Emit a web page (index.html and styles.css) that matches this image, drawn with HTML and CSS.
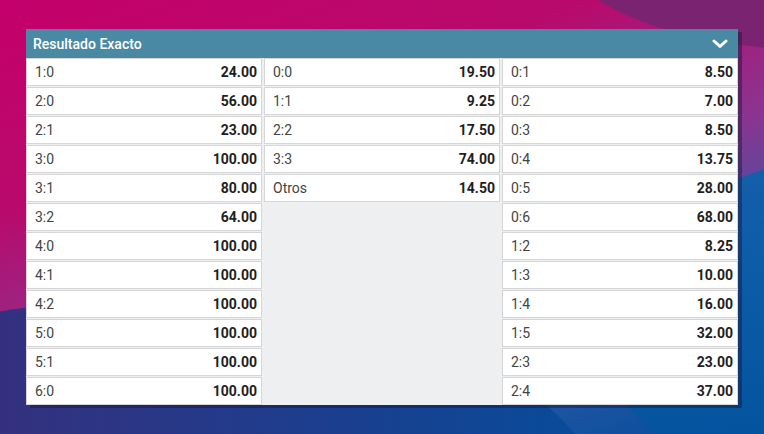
FILE: index.html
```html
<!DOCTYPE html>
<html>
<head>
<meta charset="utf-8">
<link rel="stylesheet" href="styles.css">
</head>
<body>
<div class="bg">
  <div class="wave wave-top"></div>
  <div class="wave wave-right"></div>
  <div class="wave wave-left"></div>
</div>
<div class="stage">
  <section class="panel">
    <header class="panel-head">
      <span class="title">Resultado Exacto</span>
      <svg class="chev" width="16" height="10" viewBox="0 0 16 10"><path d="M2 2 L8 7.5 L14 2" fill="none" stroke="#fff" stroke-width="3" stroke-linecap="round" stroke-linejoin="round"/></svg>
    </header>
    <div class="grid">
      <div class="col">
        <div class="cell"><span class="lbl">1:0</span><span class="val">24.00</span></div>
        <div class="cell"><span class="lbl">2:0</span><span class="val">56.00</span></div>
        <div class="cell"><span class="lbl">2:1</span><span class="val">23.00</span></div>
        <div class="cell"><span class="lbl">3:0</span><span class="val">100.00</span></div>
        <div class="cell"><span class="lbl">3:1</span><span class="val">80.00</span></div>
        <div class="cell"><span class="lbl">3:2</span><span class="val">64.00</span></div>
        <div class="cell"><span class="lbl">4:0</span><span class="val">100.00</span></div>
        <div class="cell"><span class="lbl">4:1</span><span class="val">100.00</span></div>
        <div class="cell"><span class="lbl">4:2</span><span class="val">100.00</span></div>
        <div class="cell"><span class="lbl">5:0</span><span class="val">100.00</span></div>
        <div class="cell"><span class="lbl">5:1</span><span class="val">100.00</span></div>
        <div class="cell"><span class="lbl">6:0</span><span class="val">100.00</span></div>
      </div>
      <div class="col">
        <div class="cell"><span class="lbl">0:0</span><span class="val">19.50</span></div>
        <div class="cell"><span class="lbl">1:1</span><span class="val">9.25</span></div>
        <div class="cell"><span class="lbl">2:2</span><span class="val">17.50</span></div>
        <div class="cell"><span class="lbl">3:3</span><span class="val">74.00</span></div>
        <div class="cell"><span class="lbl">Otros</span><span class="val">14.50</span></div>
      </div>
      <div class="col">
        <div class="cell"><span class="lbl">0:1</span><span class="val">8.50</span></div>
        <div class="cell"><span class="lbl">0:2</span><span class="val">7.00</span></div>
        <div class="cell"><span class="lbl">0:3</span><span class="val">8.50</span></div>
        <div class="cell"><span class="lbl">0:4</span><span class="val">13.75</span></div>
        <div class="cell"><span class="lbl">0:5</span><span class="val">28.00</span></div>
        <div class="cell"><span class="lbl">0:6</span><span class="val">68.00</span></div>
        <div class="cell"><span class="lbl">1:2</span><span class="val">8.25</span></div>
        <div class="cell"><span class="lbl">1:3</span><span class="val">10.00</span></div>
        <div class="cell"><span class="lbl">1:4</span><span class="val">16.00</span></div>
        <div class="cell"><span class="lbl">1:5</span><span class="val">32.00</span></div>
        <div class="cell"><span class="lbl">2:3</span><span class="val">23.00</span></div>
        <div class="cell"><span class="lbl">2:4</span><span class="val">37.00</span></div>
      </div>
    </div>
  </section>
</div>
</body>
</html>
```
FILE: styles.css
```css
html, body {
  margin: 0;
  padding: 0;
  width: 764px;
  height: 434px;
  overflow: hidden;
}
body {
  position: relative;
  font-family: Roboto, "Liberation Sans", sans-serif;
}
.bg {
  position: absolute;
  inset: 0;
  overflow: hidden;
  background: linear-gradient(160deg, #c4006b 0%, #b80a6c 30%, #8a3590 55%, #2f5aa6 75%, #044c9b 100%);
}
.wave {
  position: absolute;
  border-radius: 50%;
}
.wave-top {
  left: 560px;
  top: -160px;
  width: 520px;
  height: 210px;
  background: #7a2370;
  box-shadow: 0 0 0 0 transparent;
}
.wave-right {
  left: 600px;
  top: 150px;
  width: 600px;
  height: 360px;
  background: linear-gradient(180deg, #0c62ad, #01509c);
  opacity: 0.9;
}
.wave-left {
  left: -300px;
  top: 300px;
  width: 900px;
  height: 400px;
  background: linear-gradient(90deg, #4a2472, #1c3e8e 70%, #064c9b);
}
.stage {
  position: relative;
  padding: 29px 26px 0 26px;
}
.panel {
  width: 712px;
  box-shadow: 4px 3px 0 rgba(20, 20, 60, 0.45);
  background: #eeeff1;
}
.panel-head {
  height: 29px;
  background: #4a89a3;
  display: flex;
  align-items: center;
  justify-content: space-between;
  padding: 0 10px 0 7px;
  box-sizing: border-box;
}
.title {
  color: #fff;
  font-size: 14px;
  font-weight: 500;
}
.chev {
  display: block;
  margin-top: 0;
}
.grid {
  display: grid;
  grid-template-columns: 1fr 1fr 1fr;
  column-gap: 2px;
  background: #eeeff1;
}
.col {
  display: flex;
  flex-direction: column;
  gap: 1px;
}
.cell {
  height: 28px;
  box-sizing: border-box;
  background: #fff;
  border: 1px solid #d6d6d6;
  display: flex;
  align-items: center;
  justify-content: space-between;
  padding: 0 4px 0 8px;
  font-size: 14px;
}
.lbl {
  color: #444;
}
.val {
  color: #1e1e1e;
  font-weight: 700;
}
```
